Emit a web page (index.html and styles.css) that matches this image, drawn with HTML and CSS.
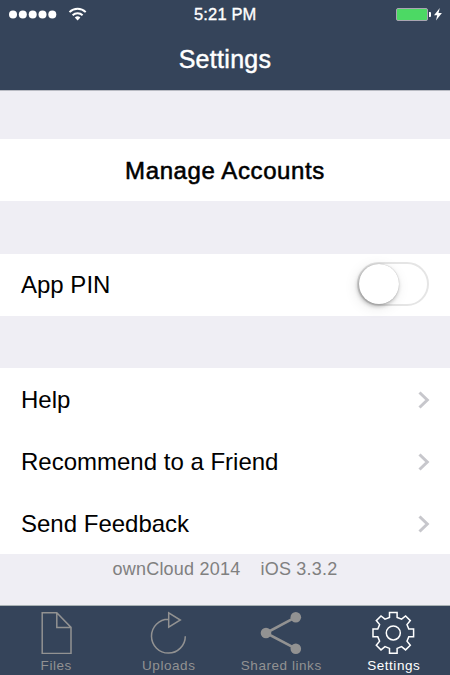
FILE: index.html
```html
<!DOCTYPE html>
<html lang="en">
<head>
<meta charset="utf-8">
<title>Settings</title>
<link rel="stylesheet" href="styles.css">
</head>
<body>
<header class="header">
  <div class="status">
    <svg class="signal" width="90" height="28" viewBox="0 0 90 28">
      <g fill="#fff"><circle cx="13" cy="14.4" r="4"/><circle cx="22.8" cy="14.4" r="4"/><circle cx="32.7" cy="14.4" r="4"/><circle cx="42.5" cy="14.4" r="4"/><circle cx="52.3" cy="14.4" r="4"/></g>
      <g fill="none" stroke="#fff" stroke-width="2"><path d="M69.5 12.1a11.7 11.7 0 0 1 16.2 0M72.6 15.3a7.3 7.3 0 0 1 10 0"/></g>
      <path d="M74.8 17.6a4.2 4.2 0 0 1 5.6 0l-2.8 2.9z" fill="#fff"/>
    </svg>
    <span class="time">5:21 PM</span>
    <svg class="battery" width="60" height="28" viewBox="0 0 60 28">
      <rect x="6.5" y="8.5" width="31" height="12" rx="1.5" fill="#4cd964" stroke="#a9a5b2"/>
      <path d="M39 12h1q1 0 1 1v3q0 1-1 1h-1z" fill="#fff"/>
      <path d="M49.8 8L44 15.2h3.2l-1.2 5.4 5.9-7.5h-3.4z" fill="#fff"/>
    </svg>
  </div>
  <h1 class="title"><span>Settings</span></h1>
</header>
<main class="content">
  <section class="group"><div class="row centered"><span class="manage">Manage Accounts</span></div></section>
  <section class="group"><div class="row"><span class="pin">App PIN</span><span class="switch"><span class="knob"></span></span></div></section>
  <section class="group">
    <div class="row"><span>Help</span><svg class="chevron" width="12" height="18" viewBox="0 0 12 18"><path d="M1.5 1.5L9.3 9l-7.8 7.5"/></svg></div>
    <div class="row"><span>Recommend to a Friend</span><svg class="chevron" width="12" height="18" viewBox="0 0 12 18"><path d="M1.5 1.5L9.3 9l-7.8 7.5"/></svg></div>
    <div class="row"><span>Send Feedback</span><svg class="chevron" width="12" height="18" viewBox="0 0 12 18"><path d="M1.5 1.5L9.3 9l-7.8 7.5"/></svg></div>
  </section>
  <footer class="version"><span>ownCloud 2014</span><span>iOS 3.3.2</span></footer>
</main>
<nav class="tabs">
  <div class="tab">
    <svg width="46" height="48" viewBox="0 0 46 48"><path d="M9.2 6.8h14.6l14.2 14.6v26H9.2zM23.8 6.8v14.6H38"/></svg>
    <span class="files">Files</span>
  </div>
  <div class="tab">
    <svg width="46" height="48" viewBox="0 0 46 48"><path d="M22.3 13.3A16.9 16.9 0 1 0 39.3 30.2M22.7 6.9v14.2l11.6-7.1z"/></svg>
    <span>Uploads</span>
  </div>
  <div class="tab">
    <svg width="46" height="48" viewBox="0 0 46 48"><path class="link" d="M37.8 11.2L8 27l29.8 15.7"/><g class="dots"><circle cx="37.8" cy="11.2" r="5.3"/><circle cx="8" cy="27" r="5.3"/><circle cx="37.8" cy="42.7" r="5.3"/></g></svg>
    <span>Shared links</span>
  </div>
  <div class="tab active">
    <svg width="46" height="48" viewBox="0 0 46 48"><g transform="translate(22.3 26.9)"><path d="M-3.8-20.3H3.8V-15.5L8.3-13.7 12.3-17 17-12.3 13.7-8.3 15.5-3.8H20.3V3.8H15.5L13.7 8.3 17 12.3 12.3 17 8.3 13.7 3.8 15.5V20.3H-3.8V15.5L-8.3 13.7-12.3 17-17 12.3-13.7 8.3-15.5 3.8H-20.3V-3.8H-15.5L-13.7-8.3-17-12.3-12.3-17-8.3-13.7-3.8-15.5Z"/><circle r="7"/></g></svg>
    <span>Settings</span>
  </div>
</nav>
</body>
</html>
```

FILE: styles.css
```css
* { box-sizing: border-box; }
body {
  margin: 0;
  width: 450px;
  height: 675px;
  display: flex;
  flex-direction: column;
  overflow: hidden;
  background: #efeef4;
  color: #000;
  font-family: "Liberation Sans", Arial, sans-serif;
}
.header {
  height: 91px;
  background: #35445a;
  border-bottom: 1px solid #b9bbc3;
  color: #fff;
}
.status {
  height: 28px;
  display: grid;
  grid-template-columns: 90px 1fr 60px;
}
.time {
  font-size: 16.5px;
  line-height: 28px;
  letter-spacing: 0.15px;
  padding-left: 104px;
  white-space: nowrap;
  -webkit-text-stroke: 0.35px #fff;
}
.title {
  margin: 0;
  height: 62px;
  font-size: 25px;
  font-weight: 400;
  line-height: 62px;
  letter-spacing: 0.3px;
  text-align: center;
  -webkit-text-stroke: 0.45px #fff;
}
.content { height: 514px; }
.group { padding-top: 52px; }
.group:first-child { padding-top: 48px; }
.group:nth-child(2) { padding-top: 53px; }
.row {
  height: 62px;
  padding: 0 21px;
  background: #fff;
  display: flex;
  align-items: center;
  justify-content: space-between;
  font-size: 24px;
  white-space: nowrap;
}
.row.centered { justify-content: center; }
.row > span:first-child { line-height: 30px; padding-top: 2px; }
.row > .pin:first-child { padding-top: 0; }
.row .manage {
  letter-spacing: 0.6px;
  -webkit-text-stroke: 0.55px #000;
}
.switch {
  width: 72px;
  height: 44px;
  margin-top: -2px;
  border: 2px solid #e5e5e5;
  border-radius: 22px;
}
.knob {
  display: block;
  width: 40px;
  height: 40px;
  border-radius: 50%;
  background: #fff;
  box-shadow: 0 0 1px rgba(0,0,0,.3), -1px 2px 4px rgba(0,0,0,.28), -2px 3px 14px rgba(0,0,0,.1);
}
.chevron { margin-top: 2px; margin-right: -1px; }
.chevron path { fill: none; stroke: #c7c7cc; stroke-width: 3; }
.version {
  display: flex;
  justify-content: center;
  gap: 20px;
  font-size: 18px;
  line-height: 30px;
  letter-spacing: 0.22px;
  color: #808080;
}
.tabs {
  height: 70px;
  background: #35445a;
  border-top: 1px solid #a9b2b4;
  display: grid;
  grid-template-columns: repeat(4, 112.5px);
  color: #929292;
}
.tab {
  display: flex;
  flex-direction: column;
  align-items: center;
  font-size: 13.5px;
  line-height: 24px;
  letter-spacing: 0.55px;
  white-space: nowrap;
}
.tab svg { flex: none; fill: none; stroke: #929292; stroke-width: 1.5; }
.tab svg .link { stroke-width: 2.6; }
.tab svg .dots { fill: #929292; stroke: none; }
.tab.active { color: #fff; }
.tab.active svg { stroke: #fff; }
```
